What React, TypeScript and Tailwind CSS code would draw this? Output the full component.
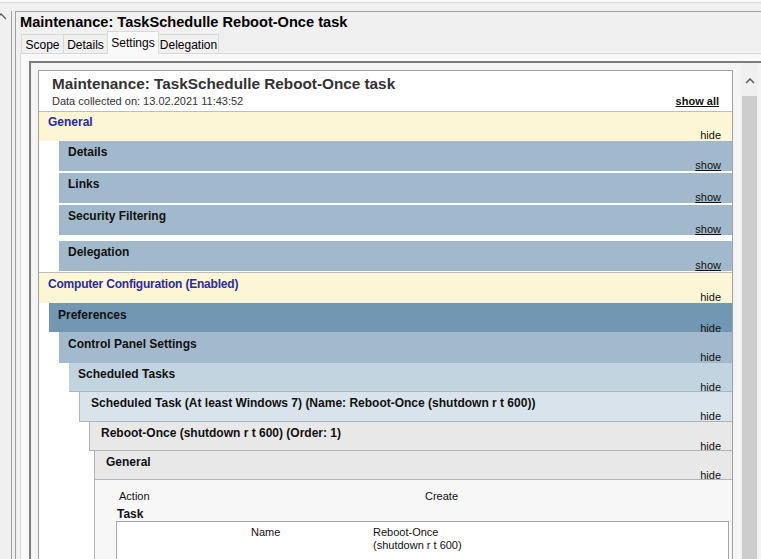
import React from 'react'

const SANS = '"Liberation Sans", Arial, sans-serif'

type SectionProps = {
  title: string
  link?: string
  className: string
  titleClass?: string
  linkClass?: string
}

function Section({ title, link = 'hide', className, titleClass = 'pl-[9px] text-[#111]', linkClass = '' }: SectionProps) {
  return (
    <div className={`flex flex-col ${className}`}>
      <div className={`whitespace-nowrap text-[12px] font-bold leading-[14px] ${titleClass}`}>{title}</div>
      <div
        className={`mt-auto pr-[11px] text-right text-[11px] leading-[12px] text-[#111] ${link === 'show' ? 'underline' : ''} ${linkClass}`}
      >
        {link}
      </div>
    </div>
  )
}

function Tabs() {
  const base = 'relative -ml-px flex justify-center border border-b-0 border-[#d9d9d9] text-[12px] leading-[15px] text-black'
  return (
    <div className="relative z-10 -mb-px flex h-[24px] items-end pl-[5px]">
      <div className={`${base} ml-0 mb-px h-[19px] w-[43px] bg-[#f0f0f0] pt-[3px]`}>Scope</div>
      <div className={`${base} mb-px h-[19px] w-[45px] bg-[#f0f0f0] pt-[3px]`}>Details</div>
      <div className={`${base} z-10 h-[23px] w-[52px] bg-[#f9f9f9] pt-[4px]`}>Settings</div>
      <div className={`${base} mb-px h-[19px] w-[61px] bg-[#f0f0f0] pt-[3px]`}>Delegation</div>
    </div>
  )
}

function Report() {
  return (
    <div className="h-[600px] w-[695px] shrink-0 border border-[#a0a0a0] bg-white">
      <div className="px-[13px] pb-[3px] pt-[4px]">
        <div className="whitespace-nowrap text-[15.3px] font-bold leading-[18px] text-[#333]">
          Maintenance: TaskSchedulle Reboot-Once task
        </div>
        <div className="mt-[2px] flex justify-between text-[11px] leading-[13px] text-[#333]">
          <span>Data collected on: 13.02.2021 11:43:52</span>
          <span className="font-bold text-[#111] underline">show all</span>
        </div>
      </div>

      <Section
        title="General"
        className="h-[30px] border-t border-[#bdbdbd] bg-[#fdf6d6] pt-[3px]"
        titleClass="pl-[9px] text-[#2a2aa2]"
      />
      <Section title="Details" link="show" className="ml-[20px] h-[30px] bg-[#a1b9cb] pt-[4px]" />
      <Section title="Links" link="show" className="ml-[20px] mt-[2px] h-[30px] bg-[#a1b9cb] pt-[4px]" />
      <Section title="Security Filtering" link="show" className="ml-[20px] mt-[2px] h-[30px] bg-[#a1b9cb] pt-[4px]" />
      <Section title="Delegation" link="show" className="ml-[20px] mt-[6px] h-[30px] bg-[#a1b9cb] pt-[4px]" />
      <Section
        title="Computer Configuration (Enabled)"
        className="mt-[1px] h-[31px] border-t border-[#bdbdbd] bg-[#fdf6d6] pt-[4px]"
        titleClass="pl-[9px] tracking-[-0.2px] text-[#2a2aa2]"
      />
      <Section title="Preferences" className="ml-[10px] h-[29px] bg-[#7297b3] pt-[5px]" linkClass="-mb-[2px]" />
      <Section title="Control Panel Settings" className="ml-[20px] h-[31px] bg-[#a2bacb] pt-[5px]" />
      <Section
        title="Scheduled Tasks"
        className="ml-[30px] h-[29px] border-b border-[#b4b4b4] bg-[#c2d4e0] pt-[4px]"
      />
      <Section
        title="Scheduled Task (At least Windows 7) (Name: Reboot-Once (shutdown r t 600))"
        className="ml-[40px] h-[30px] border-b border-l border-[#b4b4b4] bg-[#d8e3eb] pt-[4px]"
        titleClass="pl-[11px] text-[#111]"
      />
      <Section
        title="Reboot-Once (shutdown r t 600) (Order: 1)"
        className="ml-[50px] h-[29px] border-b border-l border-[#b4b4b4] bg-[#e8e8e8] pt-[4px]"
        titleClass="pl-[11px] text-[#111]"
      />
      <Section
        title="General"
        className="ml-[55px] h-[29px] border-b border-l border-[#b4b4b4] bg-[#e8e8e8] pt-[4px]"
        titleClass="pl-[11px] text-[#111]"
      />

      <div className="ml-[55px] h-[120px] border-l border-[#b4b4b4] bg-[#f7f7f7] pt-[10px]">
        <div className="flex text-[11px] leading-[13px] text-[#111]">
          <div className="w-[330px] pl-[24px]">Action</div>
          <div>Create</div>
        </div>
        <div className="mt-[4px] pl-[22px] text-[12px] font-bold leading-[14px] text-[#111]">Task</div>
        <div className="ml-[21px] mr-[3px] h-[60px] border border-[#a8a8a8] bg-white pt-[4px]">
          <div className="flex text-[11px] leading-[13px] text-[#111]">
            <div className="w-[256px] pl-[134px]">Name</div>
            <div>
              Reboot-Once
              <br />
              (shutdown r t 600)
            </div>
          </div>
        </div>
      </div>
    </div>
  )
}

export default function App() {
  return (
    <div className="h-[559px] w-[761px] overflow-hidden bg-[#f0f0f0]" style={{ fontFamily: SANS }}>
      <div className="h-[3px] border-b border-[#dadada] bg-[#f9f9f9]" />
      <div className="mt-[8px] flex h-[548px]">
        <div className="relative h-full w-[12px] shrink-0 border-r border-[#a0a0a0]">
          <svg className="absolute left-0 top-[1px]" width="8" height="8" viewBox="0 0 8 8">
            <polyline points="-4,7 1,2 6,7" fill="none" stroke="#5a5a5a" strokeWidth="1.3" />
          </svg>
        </div>
        <div className="ml-[3px] flex min-w-0 flex-1 flex-col border-l border-t border-[#a0a0a0]">
          <div className="whitespace-nowrap pl-[4px] pt-[2px] text-[14.6px] font-bold leading-[17px] text-black">
            Maintenance: TaskSchedulle Reboot-Once task
          </div>
          <Tabs />
          <div className="ml-[4px] flex-1 border-l border-t border-[#d9d9d9] bg-[#f9f9f9] pl-[8px] pt-[7px]">
            <div className="flex h-full border-l-2 border-t-2 border-[#7d7d7d] bg-[#f4f4f4]">
              <div className="pl-[7px] pt-[7px]">
                <Report />
              </div>
              <div className="ml-[8px] flex w-[17px] shrink-0 flex-col bg-[#f0f0f0]">
                <div className="flex h-[33px] items-center justify-center pt-[3px]">
                  <svg width="10" height="6" viewBox="0 0 10 6">
                    <polyline points="1,5 5,1 9,5" fill="none" stroke="#606060" strokeWidth="1.6" />
                  </svg>
                </div>
                <div className="mx-px flex-1 bg-[#cdcdcd]" />
              </div>
            </div>
          </div>
        </div>
      </div>
    </div>
  )
}
